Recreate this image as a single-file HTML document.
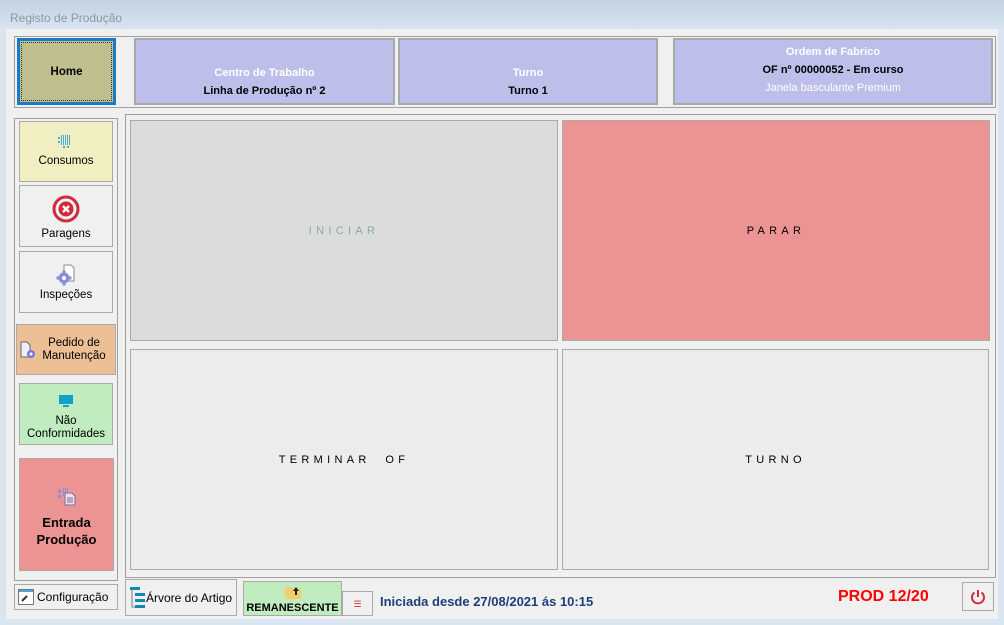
<!DOCTYPE html>
<html><head><meta charset="utf-8"><style>
*{box-sizing:border-box;margin:0;padding:0}
body{width:1004px;height:625px;overflow:hidden;background:#dae5f2;font-family:"Liberation Sans",sans-serif;position:relative}
.a{position:absolute}
.title{left:0;top:0;width:1004px;height:29px;background:linear-gradient(#c2d2e2,#d8e4f1);}
.title span{position:absolute;left:10px;top:11px;font-size:12px;color:#8e97a1}
.client{left:6px;top:29px;width:992px;height:590px;background:#f0f0f0}
.box{border:1px solid #a0a0a0}
.hdr{background:#bebeeb;border:2px solid #a9a9a9;text-align:center;font-size:11px;font-weight:bold}
.w{color:#fff;font-weight:bold}
.btn{border:1px solid #a9a9a9;text-align:center;font-size:11.5px;color:#000}
.tile{border:1px solid #a9a9a9;display:flex;align-items:center;justify-content:center;font-size:11px;letter-spacing:4.3px}
</style></head><body>
<div class="a title"><span>Registo de Produção</span></div>
<div class="a client"></div>
<div class="a box" style="left:14px;top:36px;width:982px;height:72px"></div>
<div class="a" style="left:17px;top:38px;width:99px;height:67px;background:#bfbf8f;border:3px solid #1a7ac8;outline:1px dotted #333;outline-offset:-5px;display:flex;align-items:center;justify-content:center;font-weight:bold;font-size:11.5px">Home</div>
<div class="a hdr" style="left:134px;top:38px;width:261px;height:67px"><div class="w" style="margin-top:27px">Centro de Trabalho</div><div style="margin-top:6px">Linha de Produção nº 2</div></div>
<div class="a hdr" style="left:398px;top:38px;width:260px;height:67px"><div class="w" style="margin-top:27px">Turno</div><div style="margin-top:6px">Turno 1</div></div>
<div class="a hdr" style="left:673px;top:38px;width:320px;height:67px"><div class="w" style="margin-top:6px">Ordem de Fabrico</div><div style="margin-top:6px">OF nº 00000052 - Em curso</div><div style="margin-top:6px;color:#fff;font-weight:normal">Janela basculante Premium</div></div>

<div class="a box" style="left:14px;top:118px;width:104px;height:463px"></div>
<div class="a btn" style="left:19px;top:121px;width:94px;height:61px;background:#efefc2"><svg width="16" height="16" style="margin-top:12px" viewBox="0 0 16 16"><g fill="#4aa8d8"><rect x="3" y="1" width="1" height="10"/><rect x="5" y="1" width="1" height="10"/><rect x="7" y="1" width="1" height="10"/><rect x="9" y="1" width="1" height="10"/><rect x="11" y="1" width="1" height="10"/><rect x="0" y="3" width="2" height="2"/><rect x="0" y="7" width="2" height="2"/><rect x="5" y="12" width="2" height="2"/><rect x="9" y="12" width="2" height="2"/></g></svg><div style="margin-top:2px">Consumos</div></div>
<div class="a btn" style="left:19px;top:185px;width:94px;height:62px;background:#f0f0f0"><svg width="28" height="28" style="margin-top:9px" viewBox="0 0 28 28"><circle cx="14" cy="14" r="12" fill="none" stroke="#d12a3c" stroke-width="3"/><circle cx="14" cy="14" r="7.5" fill="#d12a3c"/><path d="M11 11l6 6M17 11l-6 6" stroke="#fff" stroke-width="2.4"/></svg><div style="margin-top:2px">Paragens</div></div>
<div class="a btn" style="left:19px;top:251px;width:94px;height:62px;background:#f0f0f0"><svg width="22" height="22" style="margin-top:12px" viewBox="0 0 22 22"><path d="M9 1h7l3 3v13h-10z" fill="#fff" stroke="#888"/><g fill="#8a8ae0"><circle cx="9" cy="14" r="5.5"/><rect x="7.5" y="6.5" width="3" height="15"/><rect x="1.5" y="12.5" width="15" height="3"/></g><circle cx="9" cy="14" r="2" fill="#fff"/></svg><div style="margin-top:0px">Inspeções</div></div>
<div class="a btn" style="left:16px;top:324px;width:100px;height:51px;background:#edbf94;font-size:11.5px;line-height:13px;padding-top:12px;padding-left:16px"><svg width="18" height="18" class="a" style="left:2px;top:16px" viewBox="0 0 18 18"><path d="M2 1h6l3 3v12H2z" fill="#eef" stroke="#666"/><circle cx="12" cy="13" r="4" fill="#7777dd"/><circle cx="12" cy="13" r="1.5" fill="#fff"/></svg>Pedido de<br>Manutenção</div>
<div class="a btn" style="left:19px;top:383px;width:94px;height:62px;background:#c0ecc0;line-height:13px"><svg width="16" height="14" style="margin-top:10px" viewBox="0 0 16 14"><rect x="1" y="1" width="14" height="9" fill="#12a1c9"/><rect x="5" y="11" width="6" height="2" fill="#12a1c9"/></svg><div style="margin-top:3px">Não<br>Conformidades</div></div>
<div class="a btn" style="left:19px;top:458px;width:95px;height:113px;background:#ec9393;font-weight:bold;font-size:13px;line-height:17px"><svg width="18" height="18" style="margin-top:29px" viewBox="0 0 18 18"><g fill="#8c8ce0"><rect x="0" y="2" width="3" height="3"/><rect x="0" y="7" width="3" height="3"/><rect x="5" y="0" width="1" height="8"/><rect x="7" y="0" width="1" height="8"/><rect x="9" y="0" width="1" height="8"/></g><path d="M7 5h7l3 3v9H7z" fill="#f6dede" stroke="#7070b0"/><path d="M9 10h6M9 12h6M9 14h6" stroke="#7070b0"/></svg><div style="margin-top:4px">Entrada<br>Produção</div></div>

<div class="a box" style="left:125px;top:114px;width:871px;height:464px"></div>
<div class="a tile" style="left:130px;top:120px;width:428px;height:221px;background:#dcdcdc;color:#8aa;">INICIAR</div>
<div class="a tile" style="left:562px;top:120px;width:428px;height:221px;background:#ec9393;">PARAR</div>
<div class="a tile" style="left:130px;top:349px;width:428px;height:221px;background:#ececec;">TERMINAR&nbsp; OF</div>
<div class="a tile" style="left:562px;top:349px;width:427px;height:221px;background:#ececec;">TURNO</div>

<div class="a btn" style="left:14px;top:584px;width:104px;height:26px;font-size:12px;line-height:24px;text-align:left;padding-left:22px"><svg width="16" height="16" class="a" style="left:3px;top:4px" viewBox="0 0 16 16"><rect x="0.5" y="0.5" width="15" height="15" fill="#fff" stroke="#777"/><rect x="1" y="1" width="14" height="2" fill="#4aa8d8"/><path d="M4 12l5-5" stroke="#333" stroke-width="2"/></svg>Configuração</div>
<div class="a btn" style="left:125px;top:579px;width:112px;height:37px;font-size:12px;line-height:37px;text-align:left;padding-left:20px"><svg width="15" height="24" class="a" style="left:4px;top:7px" viewBox="0 0 15 24"><g fill="#1289b4"><rect x="0" y="0" width="10" height="3"/><rect x="5" y="6" width="10" height="3"/><rect x="5" y="12" width="10" height="3"/><rect x="5" y="18" width="10" height="3"/></g><path d="M2 3v17h3" stroke="#777" fill="none"/></svg>Árvore do Artigo</div>
<div class="a btn" style="left:243px;top:581px;width:99px;height:35px;background:#c0ecc0;font-weight:bold;font-size:11px"><svg width="16" height="14" style="margin-top:3px" viewBox="0 0 16 14"><path d="M0 2h6l1 1h9v11H0z" fill="#f2cf6e"/><path d="M11 2l-3 4h2v4h2V6h2z" fill="#222"/></svg><div>REMANESCENTE</div></div>
<div class="a btn" style="left:342px;top:591px;width:31px;height:25px;font-size:9px;line-height:24px;color:#c33">☰</div>
<div class="a" style="left:380px;top:594px;font-size:13px;font-weight:bold;color:#1d3f7a">Iniciada desde 27/08/2021 ás 10:15</div>
<div class="a" style="left:838px;top:588px;font-size:16px;font-weight:bold;color:#f00">PROD 12/20</div>
<div class="a btn" style="left:962px;top:582px;width:32px;height:29px"><svg width="18" height="18" style="margin-top:5px" viewBox="0 0 18 18"><path d="M5.5 4.5A6 6 0 1 0 12.5 4.5" fill="none" stroke="#d12a3c" stroke-width="2"/><path d="M9 2v7" stroke="#d12a3c" stroke-width="2"/></svg></div>
</body></html>
